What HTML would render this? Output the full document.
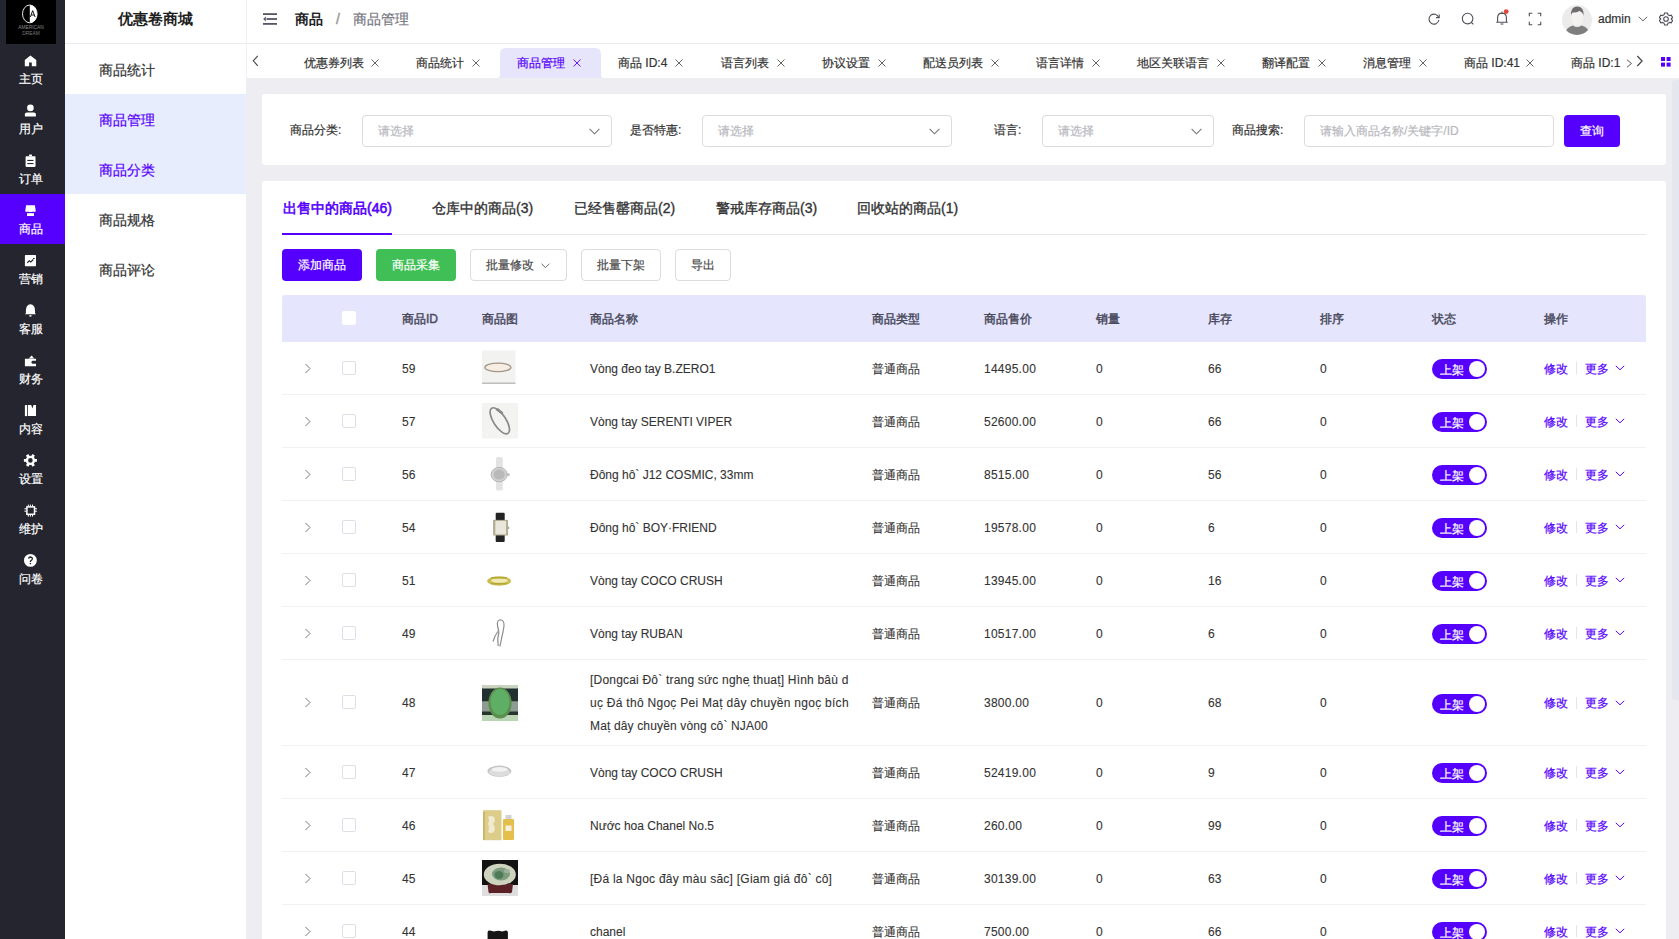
<!DOCTYPE html><html><head><meta charset="utf-8"><style>
*{box-sizing:border-box;margin:0;padding:0}
html,body{width:1679px;height:939px;overflow:hidden;background:#eeeef2;font-family:"Liberation Sans",sans-serif;color:#333;font-size:12px;-webkit-text-stroke-width:0.2px}
.a{position:absolute;white-space:nowrap}
#sb1{position:absolute;left:0;top:0;width:65px;height:939px;background:#25252f}
#logo{position:absolute;left:6px;top:0;width:50px;height:44px;background:#000}
.mi{position:absolute;left:0;width:65px;height:50px;color:#fff}
.mi.on{background:#5500ff}
.mi svg{position:absolute;left:20px;top:6px;width:22px;height:22px}
.mi span{position:absolute;left:0;width:61px;text-align:center;top:27px;font-size:12px;line-height:16px}
#sb2{position:absolute;left:65px;top:0;width:181px;height:939px;background:#fff}
#sb2 .ttl{position:absolute;left:0;top:0;width:181px;height:44px;line-height:38px;text-align:center;font-size:15px;font-weight:bold;color:#1f1f1f;-webkit-text-stroke-width:0;border-bottom:1px solid #e9e9ee}
.si{position:absolute;left:0;width:181px;height:50px;line-height:52px;padding-left:34px;font-size:14px;color:#333}
.si.on{background:#e8edfe;color:#5500ff}
#hdr{position:absolute;left:246px;top:0;width:1433px;height:44px;background:#fff;border-bottom:1px solid #e9e9ee;border-left:1px solid #f0f0f3}
#tabs{position:absolute;left:246px;top:44px;width:1433px;height:34px;background:#fff;border-left:1px solid #f0f0f3}
.tt{position:absolute;top:10px;font-size:12px;line-height:18px;color:#333;white-space:nowrap}
.tx{position:absolute;top:15px;width:8px;height:8px}
.card{position:absolute;background:#fff;border-radius:3px}
.lbl{position:absolute;top:122px;font-size:12px;line-height:16px;color:#333;white-space:nowrap}
.sel{position:absolute;top:115px;height:32px;border:1px solid #dcdcdf;border-radius:4px;background:#fff}
.sel .ph{position:absolute;left:15px;top:7px;font-size:12px;line-height:16px;color:#b8b8be;white-space:nowrap}
.sel svg{position:absolute;right:11px;top:12px;width:11px;height:7px}
.btn{position:absolute;top:249px;height:32px;border-radius:4px;font-size:12px;line-height:32px;text-align:center;white-space:nowrap}
.ptab{position:absolute;top:199px;font-size:14px;line-height:18px;color:#333;white-space:nowrap;-webkit-text-stroke-width:0.35px}
.hd{position:absolute;top:311px;font-size:12px;line-height:16px;color:#4b4b5e;-webkit-text-stroke-width:0.45px;white-space:nowrap}
.sep{position:absolute;left:282px;width:1364px;height:1px;background:#f1f1f1}
.c{position:absolute;font-size:12px;line-height:16px;color:#333;white-space:nowrap;-webkit-text-stroke-width:0.1px}
.cb{position:absolute;left:342px;width:14px;height:14px;border:1px solid #dcdfe6;border-radius:2px;background:#fff}
.arr{position:absolute;left:304px;width:8px;height:11px}
.sw{position:absolute;left:1432px;width:55px;height:20px;border-radius:10px;background:#5500ff}
.sw b{position:absolute;right:2px;top:2px;width:16px;height:16px;border-radius:8px;background:#fff}
.sw i{position:absolute;left:8px;top:2.5px;font-style:normal;color:#fff;font-size:12px;line-height:16px}
.act{position:absolute;font-size:12px;line-height:16px;color:#5500ff;white-space:nowrap}
.vl{position:absolute;left:1576px;width:1px;height:12px;background:#e4e4ea}
.mch{position:absolute;left:1615px;width:10px;height:6px}
.img{position:absolute;left:482px;width:36px;height:36px}
</style></head><body>
<div id="sb1"><div id="logo">
<svg width="50" height="44" viewBox="0 0 50 44" style="position:absolute;left:0;top:0"><ellipse cx="23.8" cy="13.9" rx="7.3" ry="8.9" fill="none" stroke="#fff" stroke-width="0.9"/><path d="M23.8 5 A7.3 8.9 0 0 1 23.8 22.8 Z" fill="#fff"/><path d="M24.3 17 L26.7 10.6 L29.1 17 M25.2 15 H28.2" stroke="#000" stroke-width="0.9" fill="none"/><text x="25" y="28.5" font-size="4.8" fill="#8a8a8a" text-anchor="middle" font-family="Liberation Sans" style="-webkit-text-stroke-width:0">AMERICAN</text><text x="25" y="34.5" font-size="4.8" fill="#7a7a7a" text-anchor="middle" font-family="Liberation Sans" style="-webkit-text-stroke-width:0">DREAM</text></svg>
</div>
<div class="mi" style="top:44px"><svg viewBox="0 0 22 22"><path d="M10.4 5.4 L16.3 9.9 V16.2 H11.8 V12.6 H9.1 V16.2 H4.8 V9.9 Z" fill="#fff"/></svg><span>主页</span></div>
<div class="mi" style="top:94px"><svg viewBox="0 0 22 22"><circle cx="10.4" cy="7.9" r="3.3" fill="#fff"/><path d="M4.9 16.6 V14.3 Q4.9 12.6 6.9 12.6 H13.9 Q15.9 12.6 15.9 14.3 V16.6 Z" fill="#fff"/></svg><span>用户</span></div>
<div class="mi" style="top:144px"><svg viewBox="0 0 22 22"><rect x="5.6" y="6.2" width="9.9" height="10.7" rx="0.8" fill="#fff"/><rect x="9" y="4.6" width="3" height="1.6" fill="#fff"/><rect x="7.3" y="9.9" width="6.2" height="1.1" fill="#25252f"/><rect x="7.3" y="13" width="6.2" height="1.1" fill="#25252f"/></svg><span>订单</span></div>
<div class="mi on" style="top:194px"><svg viewBox="0 0 22 22"><path d="M6.1 5.3 H14.9 L15.8 11.3 Q14.5 12.3 13.2 11.6 Q11.9 12.4 10.5 11.7 Q9.1 12.4 7.8 11.6 Q6.5 12.3 5.2 11.3 Z" fill="#fff"/><path d="M7 12.9 Q8.5 13.5 10.5 13.1 Q12.5 13.5 14 12.9 V16 H7 Z" fill="#fff"/></svg><span>商品</span></div>
<div class="mi" style="top:244px"><svg viewBox="0 0 22 22"><rect x="4.9" y="5.1" width="11.1" height="11.1" rx="0.6" fill="#fff"/><path d="M7.2 12.9 L9.3 10.8 L10.8 12 L13.3 9.5" stroke="#25252f" stroke-width="1.1" fill="none"/><rect x="13" y="8" width="1.6" height="1" fill="#25252f"/></svg><span>营销</span></div>
<div class="mi" style="top:294px"><svg viewBox="0 0 22 22"><path d="M10.4 4.3 Q14.8 5 15 10 V13.2 L16 14.3 H4.9 L5.9 13.2 V10 Q6.1 5 10.4 4.3 Z" fill="#fff"/><path d="M9.1 15.2 H11.8 Q11.6 16.8 10.4 16.8 Q9.2 16.8 9.1 15.2 Z" fill="#fff"/></svg><span>客服</span></div>
<div class="mi" style="top:344px"><svg viewBox="0 0 22 22"><path d="M8.7 8.4 L11.8 5.6 L14 8.4 Z" fill="#fff"/><path d="M4.9 8.8 H16 V10.8 H12.6 Q11.4 11 11.4 12.3 Q11.4 13.7 12.6 13.8 H16 V16.2 H4.9 Z" fill="#fff"/></svg><span>财务</span></div>
<div class="mi" style="top:394px"><svg viewBox="0 0 22 22"><rect x="4.9" y="5.1" width="2.2" height="11" fill="#fff"/><path d="M7.9 5.1 H11.2 L12.4 8.6 L13.5 5.1 H16 V16.1 H7.9 Z" fill="#fff"/></svg><span>内容</span></div>
<div class="mi" style="top:444px"><svg viewBox="0 0 22 22"><g transform="translate(10.4 10.4)" fill="#fff"><circle r="3.5" fill="none" stroke="#fff" stroke-width="2.4"/><rect x="-1.4" y="-6.5" width="2.8" height="2.4" transform="rotate(30)"/><rect x="-1.4" y="-6.5" width="2.8" height="2.4" transform="rotate(90)"/><rect x="-1.4" y="-6.5" width="2.8" height="2.4" transform="rotate(150)"/><rect x="-1.4" y="-6.5" width="2.8" height="2.4" transform="rotate(210)"/><rect x="-1.4" y="-6.5" width="2.8" height="2.4" transform="rotate(270)"/><rect x="-1.4" y="-6.5" width="2.8" height="2.4" transform="rotate(330)"/></g></svg><span>设置</span></div>
<div class="mi" style="top:494px"><svg viewBox="0 0 22 22"><rect x="6.9" y="6.9" width="7.6" height="7.4" fill="none" stroke="#fff" stroke-width="1.5"/><path d="M8.3 4.6 V6.5 M10.4 4.6 V6.5 M12.5 4.6 V6.5 M8.3 14.7 V16.6 M10.4 14.7 V16.6 M12.5 14.7 V16.6 M4.4 8.8 H6.5 M4.4 11.2 H6.5 M14.9 8.8 H17 M14.9 11.2 H17" stroke="#fff" stroke-width="1"/></svg><span>维护</span></div>
<div class="mi" style="top:544px"><svg viewBox="0 0 22 22"><circle cx="10.4" cy="10.4" r="6.4" fill="#fff"/><path d="M8.6 8.6 Q8.8 7 10.5 7 Q12.4 7.1 12.4 8.8 Q12.3 10 11 10.6 Q10.4 11 10.4 12" stroke="#25252f" stroke-width="1.3" fill="none"/><circle cx="10.4" cy="13.6" r="0.8" fill="#25252f"/></svg><span>问卷</span></div>
</div>
<div id="sb2"><div class="ttl">优惠卷商城</div>
<div class="si" style="top:44px">商品统计</div>
<div class="si on" style="top:94px">商品管理</div>
<div class="si on" style="top:144px">商品分类</div>
<div class="si" style="top:194px">商品规格</div>
<div class="si" style="top:244px">商品评论</div>
</div>
<div id="hdr">
<svg class="a" style="left:16px;top:13px" width="14" height="12" viewBox="0 0 14 12"><rect x="0" y="0.2" width="14" height="1.8" fill="#555566"/><rect x="3.5" y="5.1" width="10.5" height="1.8" fill="#555566"/><rect x="0" y="10" width="14" height="1.8" fill="#555566"/><path d="M2.8 3.6 L0.2 6 L2.8 8.4 Z" fill="#555566"/></svg>
<div class="a" style="left:48px;top:10px;font-size:14px;line-height:18px;font-weight:bold;color:#222;-webkit-text-stroke-width:0">商品</div>
<div class="a" style="left:89px;top:10px;font-size:14px;line-height:18px;color:#999;-webkit-text-stroke-width:0.45px">/</div>
<div class="a" style="left:106px;top:10px;font-size:14px;line-height:18px;color:#76767f">商品管理</div>
<svg class="a" style="left:1180px;top:12px" width="14" height="14" viewBox="0 0 14 14"><path d="M11.6 5.2 A5 5 0 1 0 11.9 8" fill="none" stroke="#4f4f5a" stroke-width="1.1"/><path d="M12.2 2.4 V5.6 H9" fill="none" stroke="#4f4f5a" stroke-width="1.1"/></svg>
<svg class="a" style="left:1214px;top:12px" width="14" height="14" viewBox="0 0 14 14"><circle cx="6.6" cy="6.6" r="5.3" fill="none" stroke="#4f4f5a" stroke-width="1.1"/><path d="M10.3 10.3 L12.4 12.4" stroke="#4f4f5a" stroke-width="1.2"/></svg>
<svg class="a" style="left:1247px;top:9px" width="16" height="17" viewBox="0 0 16 17"><path d="M2.2 13.3 H13.8 M3.6 13.3 V8.7 Q3.7 4.2 8 4.1 Q12.3 4.2 12.4 8.7 V13.3 M8 2.6 V4.1" fill="none" stroke="#4f4f5a" stroke-width="1.1"/><path d="M6.6 15 H9.4" stroke="#4f4f5a" stroke-width="1.1"/><circle cx="12.2" cy="2.6" r="2.4" fill="#e0473b"/></svg>
<svg class="a" style="left:1281px;top:12px" width="14" height="14" viewBox="0 0 14 14"><path d="M1.3 4.3 V1.3 H4.3 M9.7 1.3 H12.7 V4.3 M12.7 9.7 V12.7 H9.7 M4.3 12.7 H1.3 V9.7" fill="none" stroke="#4f4f5a" stroke-width="1.1"/></svg>
<svg class="a" style="left:1315px;top:4.5px" width="30" height="30" viewBox="0 0 30 30"><defs><clipPath id="av"><circle cx="15" cy="15" r="15"/></clipPath></defs><g clip-path="url(#av)"><rect width="30" height="30" fill="#ebebeb"/><ellipse cx="15.3" cy="12" rx="6.2" ry="8.6" fill="#f4f1f1"/><path d="M9 10.5 Q8.5 1.6 15.5 1.5 Q22.2 1.8 21.6 11 Q20.8 7 17.5 6 Q14 8 10.5 7.5 Q9.6 8.5 9 10.5 Z" fill="#6d6d6d"/><path d="M3 30 Q3.5 22 11 20.5 Q15 23.5 19.5 20.5 Q27 22 27.5 30 Z" fill="#7e7e7e"/></g></svg>
<div class="a" style="left:1351px;top:11px;font-size:12px;line-height:16px;color:#333">admin</div>
<svg class="a" style="left:1391px;top:16px" width="10" height="6" viewBox="0 0 10 6"><path d="M0.8 0.8 L5 4.8 L9.2 0.8" fill="none" stroke="#666" stroke-width="1"/></svg>
<svg class="a" style="left:1412px;top:12px" width="14" height="14" viewBox="0 0 14 14"><path fill="none" stroke="#4f4f5a" stroke-width="1.1" d="M5.6 1 H8.4 L8.9 2.7 L10.5 3.6 L12.2 3.1 L13.6 5.5 L12.3 6.8 V7.2 L13.6 8.5 L12.2 10.9 L10.5 10.4 L8.9 11.3 L8.4 13 H5.6 L5.1 11.3 L3.5 10.4 L1.8 10.9 L0.4 8.5 L1.7 7.2 V6.8 L0.4 5.5 L1.8 3.1 L3.5 3.6 L5.1 2.7 Z"/><circle cx="7" cy="7" r="2.3" fill="none" stroke="#4f4f5a" stroke-width="1.1"/></svg>
</div>
<div id="tabs">
<svg class="a" style="left:5px;top:11px" width="8" height="12" viewBox="0 0 8 12"><path d="M5.8 0.8 L1.3 5.8 L5.8 10.8" fill="none" stroke="#444" stroke-width="1.1"/></svg>
<svg class="a" style="left:250px;top:4px" width="107" height="30" viewBox="0 0 107 30"><path d="M0 30 Q3 30 3 27 V6 Q3 0 9 0 H98 Q104 0 104 6 V27 Q104 30 107 30 Z" fill="#e7e5fc"/></svg>
<div class="tt" style="left:57px;color:#333">优惠券列表</div>
<svg class="tx" style="left:124px" viewBox="0 0 8 8"><path d="M0.5 0.5 L7.5 7.5 M7.5 0.5 L0.5 7.5" stroke="#555" stroke-width="0.9"/></svg>
<div class="tt" style="left:169px;color:#333">商品统计</div>
<svg class="tx" style="left:225px" viewBox="0 0 8 8"><path d="M0.5 0.5 L7.5 7.5 M7.5 0.5 L0.5 7.5" stroke="#555" stroke-width="0.9"/></svg>
<div class="tt" style="left:270px;color:#5500ff">商品管理</div>
<svg class="tx" style="left:326px" viewBox="0 0 8 8"><path d="M0.5 0.5 L7.5 7.5 M7.5 0.5 L0.5 7.5" stroke="#5500ff" stroke-width="0.9"/></svg>
<div class="tt" style="left:371px;color:#333">商品 ID:4</div>
<svg class="tx" style="left:428px" viewBox="0 0 8 8"><path d="M0.5 0.5 L7.5 7.5 M7.5 0.5 L0.5 7.5" stroke="#555" stroke-width="0.9"/></svg>
<div class="tt" style="left:474px;color:#333">语言列表</div>
<svg class="tx" style="left:530px" viewBox="0 0 8 8"><path d="M0.5 0.5 L7.5 7.5 M7.5 0.5 L0.5 7.5" stroke="#555" stroke-width="0.9"/></svg>
<div class="tt" style="left:575px;color:#333">协议设置</div>
<svg class="tx" style="left:631px" viewBox="0 0 8 8"><path d="M0.5 0.5 L7.5 7.5 M7.5 0.5 L0.5 7.5" stroke="#555" stroke-width="0.9"/></svg>
<div class="tt" style="left:676px;color:#333">配送员列表</div>
<svg class="tx" style="left:744px" viewBox="0 0 8 8"><path d="M0.5 0.5 L7.5 7.5 M7.5 0.5 L0.5 7.5" stroke="#555" stroke-width="0.9"/></svg>
<div class="tt" style="left:789px;color:#333">语言详情</div>
<svg class="tx" style="left:845px" viewBox="0 0 8 8"><path d="M0.5 0.5 L7.5 7.5 M7.5 0.5 L0.5 7.5" stroke="#555" stroke-width="0.9"/></svg>
<div class="tt" style="left:890px;color:#333">地区关联语言</div>
<svg class="tx" style="left:970px" viewBox="0 0 8 8"><path d="M0.5 0.5 L7.5 7.5 M7.5 0.5 L0.5 7.5" stroke="#555" stroke-width="0.9"/></svg>
<div class="tt" style="left:1015px;color:#333">翻译配置</div>
<svg class="tx" style="left:1071px" viewBox="0 0 8 8"><path d="M0.5 0.5 L7.5 7.5 M7.5 0.5 L0.5 7.5" stroke="#555" stroke-width="0.9"/></svg>
<div class="tt" style="left:1116px;color:#333">消息管理</div>
<svg class="tx" style="left:1172px" viewBox="0 0 8 8"><path d="M0.5 0.5 L7.5 7.5 M7.5 0.5 L0.5 7.5" stroke="#555" stroke-width="0.9"/></svg>
<div class="tt" style="left:1217px;color:#333">商品 ID:41</div>
<svg class="tx" style="left:1279px" viewBox="0 0 8 8"><path d="M0.5 0.5 L7.5 7.5 M7.5 0.5 L0.5 7.5" stroke="#555" stroke-width="0.9"/></svg>
<div class="tt" style="left:1324px;color:#333">商品 ID:1</div>
<svg class="a" style="left:1379px;top:15px" width="8" height="9" viewBox="0 0 8 9"><path d="M1 0.8 L5.5 4.5 L1 8.2" fill="none" stroke="#555" stroke-width="1"/></svg>
<div class="a" style="left:1389px;top:0;width:28px;height:34px;background:#fff"></div>
<svg class="a" style="left:1389px;top:11px" width="8" height="12" viewBox="0 0 8 12"><path d="M1.3 1 L6.1 6 L1.3 11" fill="none" stroke="#444" stroke-width="1.2"/></svg>
<svg class="a" style="left:1414px;top:13px" width="10" height="10" viewBox="0 0 10 10"><rect x="0" y="0" width="4" height="4" fill="#5500ff"/><rect x="5.6" y="0" width="4" height="4" fill="#5500ff"/><rect x="0" y="5.6" width="4" height="4" fill="#5500ff"/><rect x="5.6" y="5.6" width="4" height="4" fill="#5500ff"/></svg>
</div>
<div class="card" style="left:262px;top:94px;width:1404px;height:71px"></div>
<div class="lbl" style="left:290px">商品分类:</div>
<div class="sel" style="left:362px;width:250px"><div class="ph">请选择</div><svg viewBox="0 0 11 7"><path d="M0.6 0.8 L5.5 5.8 L10.4 0.8" fill="none" stroke="#777" stroke-width="1.1"/></svg></div>
<div class="lbl" style="left:630px">是否特惠:</div>
<div class="sel" style="left:702px;width:250px"><div class="ph">请选择</div><svg viewBox="0 0 11 7"><path d="M0.6 0.8 L5.5 5.8 L10.4 0.8" fill="none" stroke="#777" stroke-width="1.1"/></svg></div>
<div class="lbl" style="left:994px">语言:</div>
<div class="sel" style="left:1042px;width:172px"><div class="ph">请选择</div><svg viewBox="0 0 11 7"><path d="M0.6 0.8 L5.5 5.8 L10.4 0.8" fill="none" stroke="#777" stroke-width="1.1"/></svg></div>
<div class="lbl" style="left:1232px">商品搜索:</div>
<div class="sel" style="left:1304px;width:250px"><div class="ph">请输入商品名称/关键字/ID</div></div>
<div class="btn" style="left:1564px;top:115px;width:56px;background:#5500ff;color:#fff">查询</div>
<div class="card" style="left:262px;top:181px;width:1404px;height:790px"></div>
<div class="ptab" style="left:283px;color:#5500ff;-webkit-text-stroke-width:0.6px">出售中的商品(46)</div>
<div class="ptab" style="left:432px;">仓库中的商品(3)</div>
<div class="ptab" style="left:574px;">已经售罄商品(2)</div>
<div class="ptab" style="left:716px;">警戒库存商品(3)</div>
<div class="ptab" style="left:857px;">回收站的商品(1)</div>
<div class="a" style="left:282px;top:234px;width:1364px;height:1px;background:#e6e6ea"></div>
<div class="a" style="left:282px;top:233px;width:110px;height:2px;background:#5500ff"></div>
<div class="btn" style="left:282px;width:80px;background:#5500ff;color:#fff">添加商品</div>
<div class="btn" style="left:376px;width:80px;background:#3fbf55;color:#fff">商品采集</div>
<div class="btn" style="left:470px;width:97px;border:1px solid #dcdcdf;color:#4a4a4a;text-align:left;padding-left:15px;line-height:30px">批量修改<svg style="position:absolute;left:70px;top:13px" width="9" height="6" viewBox="0 0 9 6"><path d="M0.6 0.8 L4.5 4.6 L8.4 0.8" fill="none" stroke="#666" stroke-width="1"/></svg></div>
<div class="btn" style="left:581px;width:80px;border:1px solid #dcdcdf;color:#4a4a4a;line-height:30px">批量下架</div>
<div class="btn" style="left:675px;width:56px;border:1px solid #dcdcdf;color:#4a4a4a;line-height:30px">导出</div>
<div class="a" style="left:282px;top:295px;width:1364px;height:47px;background:#e5e5fd;border-radius:3px 3px 0 0"></div>
<div class="cb" style="top:311px;border-color:#fff"></div>
<div class="hd" style="left:402px">商品ID</div>
<div class="hd" style="left:482px">商品图</div>
<div class="hd" style="left:590px">商品名称</div>
<div class="hd" style="left:872px">商品类型</div>
<div class="hd" style="left:984px">商品售价</div>
<div class="hd" style="left:1096px">销量</div>
<div class="hd" style="left:1208px">库存</div>
<div class="hd" style="left:1320px">排序</div>
<div class="hd" style="left:1432px">状态</div>
<div class="hd" style="left:1544px">操作</div>
<div class="sep" style="top:394px"></div>
<svg class="arr" style="top:363px" viewBox="0 0 8 11"><path d="M1.5 1 L6 5.5 L1.5 10" fill="none" stroke="#777" stroke-width="1"/></svg>
<div class="cb" style="top:361px"></div>
<div class="c" style="left:402px;top:361px">59</div>
<svg class="img" style="top:350px" viewBox="0 0 36 36"><rect x="0" y="0.5" width="33.5" height="33" fill="#f2f2f1"/><rect x="0" y="32.6" width="33.5" height="1.2" fill="#b0b0b0"/><ellipse cx="15.9" cy="17.4" rx="13" ry="4.2" fill="#f7ede3" stroke="#a3968a" stroke-width="1.3"/></svg>
<div class="c" style="left:590px;top:361px;letter-spacing:0px">Vòng đeo tay B.ZERO1</div>
<div class="c" style="left:872px;top:361px">普通商品</div>
<div class="c" style="left:984px;top:361px;letter-spacing:0.25px">14495.00</div>
<div class="c" style="left:1096px;top:361px">0</div>
<div class="c" style="left:1208px;top:361px">66</div>
<div class="c" style="left:1320px;top:361px">0</div>
<div class="sw" style="top:359px"><i>上架</i><b></b></div>
<div class="act" style="left:1544px;top:361px">修改</div>
<div class="vl" style="top:362px"></div>
<div class="act" style="left:1585px;top:361px">更多</div>
<svg class="mch" style="top:365px" viewBox="0 0 10 6"><path d="M0.8 0.8 L5 4.8 L9.2 0.8" fill="none" stroke="#5500ff" stroke-width="1"/></svg>
<div class="sep" style="top:447px"></div>
<svg class="arr" style="top:416px" viewBox="0 0 8 11"><path d="M1.5 1 L6 5.5 L1.5 10" fill="none" stroke="#777" stroke-width="1"/></svg>
<div class="cb" style="top:414px"></div>
<div class="c" style="left:402px;top:414px">57</div>
<svg class="img" style="top:403px" viewBox="0 0 36 36"><rect x="0" y="0" width="36" height="35.5" fill="#f3f3f1"/><ellipse cx="17.8" cy="17.8" rx="6.2" ry="15" transform="rotate(-33 17.8 17.8)" fill="none" stroke="#8a8a8a" stroke-width="1.7"/><path d="M14 6.5 L20 11 M15.5 5.5 L21 10" stroke="#888" stroke-width="1.1"/></svg>
<div class="c" style="left:590px;top:414px;letter-spacing:0px">Vòng tay SERENTI VIPER</div>
<div class="c" style="left:872px;top:414px">普通商品</div>
<div class="c" style="left:984px;top:414px;letter-spacing:0.25px">52600.00</div>
<div class="c" style="left:1096px;top:414px">0</div>
<div class="c" style="left:1208px;top:414px">66</div>
<div class="c" style="left:1320px;top:414px">0</div>
<div class="sw" style="top:412px"><i>上架</i><b></b></div>
<div class="act" style="left:1544px;top:414px">修改</div>
<div class="vl" style="top:415px"></div>
<div class="act" style="left:1585px;top:414px">更多</div>
<svg class="mch" style="top:418px" viewBox="0 0 10 6"><path d="M0.8 0.8 L5 4.8 L9.2 0.8" fill="none" stroke="#5500ff" stroke-width="1"/></svg>
<div class="sep" style="top:500px"></div>
<svg class="arr" style="top:469px" viewBox="0 0 8 11"><path d="M1.5 1 L6 5.5 L1.5 10" fill="none" stroke="#777" stroke-width="1"/></svg>
<div class="cb" style="top:467px"></div>
<div class="c" style="left:402px;top:467px">56</div>
<svg class="img" style="top:456px" viewBox="0 0 36 36"><rect x="14" y="1" width="6.8" height="33.5" rx="1.5" fill="#e3e3e3"/><ellipse cx="17.2" cy="18.6" rx="8" ry="7.2" fill="#d2d2d2" stroke="#b4b4b4" stroke-width="1"/><ellipse cx="17.2" cy="18.6" rx="5.6" ry="5" fill="#b9b9b9"/><rect x="25" y="17.3" width="2.6" height="2.6" fill="#bcbcbc"/></svg>
<div class="c" style="left:590px;top:467px;letter-spacing:0px">Đông hô` J12 COSMIC, 33mm</div>
<div class="c" style="left:872px;top:467px">普通商品</div>
<div class="c" style="left:984px;top:467px;letter-spacing:0.25px">8515.00</div>
<div class="c" style="left:1096px;top:467px">0</div>
<div class="c" style="left:1208px;top:467px">56</div>
<div class="c" style="left:1320px;top:467px">0</div>
<div class="sw" style="top:465px"><i>上架</i><b></b></div>
<div class="act" style="left:1544px;top:467px">修改</div>
<div class="vl" style="top:468px"></div>
<div class="act" style="left:1585px;top:467px">更多</div>
<svg class="mch" style="top:471px" viewBox="0 0 10 6"><path d="M0.8 0.8 L5 4.8 L9.2 0.8" fill="none" stroke="#5500ff" stroke-width="1"/></svg>
<div class="sep" style="top:553px"></div>
<svg class="arr" style="top:522px" viewBox="0 0 8 11"><path d="M1.5 1 L6 5.5 L1.5 10" fill="none" stroke="#777" stroke-width="1"/></svg>
<div class="cb" style="top:520px"></div>
<div class="c" style="left:402px;top:520px">54</div>
<svg class="img" style="top:509px" viewBox="0 0 36 36"><rect x="13.7" y="3.7" width="9" height="29.3" rx="1" fill="#232323"/><rect x="11.1" y="10.9" width="14.9" height="15.6" fill="#b3aa92"/><rect x="13.3" y="12" width="10.8" height="13.4" fill="#e9e7dc"/><rect x="26" y="17.5" width="1.2" height="2.5" fill="#aaa"/></svg>
<div class="c" style="left:590px;top:520px;letter-spacing:0px">Đông hô` BOY·FRIEND</div>
<div class="c" style="left:872px;top:520px">普通商品</div>
<div class="c" style="left:984px;top:520px;letter-spacing:0.25px">19578.00</div>
<div class="c" style="left:1096px;top:520px">0</div>
<div class="c" style="left:1208px;top:520px">6</div>
<div class="c" style="left:1320px;top:520px">0</div>
<div class="sw" style="top:518px"><i>上架</i><b></b></div>
<div class="act" style="left:1544px;top:520px">修改</div>
<div class="vl" style="top:521px"></div>
<div class="act" style="left:1585px;top:520px">更多</div>
<svg class="mch" style="top:524px" viewBox="0 0 10 6"><path d="M0.8 0.8 L5 4.8 L9.2 0.8" fill="none" stroke="#5500ff" stroke-width="1"/></svg>
<div class="sep" style="top:606px"></div>
<svg class="arr" style="top:575px" viewBox="0 0 8 11"><path d="M1.5 1 L6 5.5 L1.5 10" fill="none" stroke="#777" stroke-width="1"/></svg>
<div class="cb" style="top:573px"></div>
<div class="c" style="left:402px;top:573px">51</div>
<svg class="img" style="top:562px" viewBox="0 0 36 36"><ellipse cx="17.1" cy="19" rx="12" ry="4.7" fill="#c9bd4e"/><ellipse cx="17.5" cy="18.6" rx="8.5" ry="2.2" fill="#efe9b4"/><rect x="9" y="15" width="16" height="1.4" fill="#b5a83a"/><rect x="9" y="21" width="16" height="1.4" fill="#b5a83a"/></svg>
<div class="c" style="left:590px;top:573px;letter-spacing:0px">Vòng tay COCO CRUSH</div>
<div class="c" style="left:872px;top:573px">普通商品</div>
<div class="c" style="left:984px;top:573px;letter-spacing:0.25px">13945.00</div>
<div class="c" style="left:1096px;top:573px">0</div>
<div class="c" style="left:1208px;top:573px">16</div>
<div class="c" style="left:1320px;top:573px">0</div>
<div class="sw" style="top:571px"><i>上架</i><b></b></div>
<div class="act" style="left:1544px;top:573px">修改</div>
<div class="vl" style="top:574px"></div>
<div class="act" style="left:1585px;top:573px">更多</div>
<svg class="mch" style="top:577px" viewBox="0 0 10 6"><path d="M0.8 0.8 L5 4.8 L9.2 0.8" fill="none" stroke="#5500ff" stroke-width="1"/></svg>
<div class="sep" style="top:659px"></div>
<svg class="arr" style="top:628px" viewBox="0 0 8 11"><path d="M1.5 1 L6 5.5 L1.5 10" fill="none" stroke="#777" stroke-width="1"/></svg>
<div class="cb" style="top:626px"></div>
<div class="c" style="left:402px;top:626px">49</div>
<svg class="img" style="top:615px" viewBox="0 0 36 36"><path d="M16.8 16 Q13.5 6 17.5 5 Q22.5 4.5 22 11 Q21.2 17 19.6 23 Q18.8 28 17.8 31.5 M16.5 15.5 Q12.5 21 11 26.5 M17 16.5 Q15 24 16.2 31" fill="none" stroke="#8d8d8d" stroke-width="1.2"/></svg>
<div class="c" style="left:590px;top:626px;letter-spacing:0px">Vòng tay RUBAN</div>
<div class="c" style="left:872px;top:626px">普通商品</div>
<div class="c" style="left:984px;top:626px;letter-spacing:0.25px">10517.00</div>
<div class="c" style="left:1096px;top:626px">0</div>
<div class="c" style="left:1208px;top:626px">6</div>
<div class="c" style="left:1320px;top:626px">0</div>
<div class="sw" style="top:624px"><i>上架</i><b></b></div>
<div class="act" style="left:1544px;top:626px">修改</div>
<div class="vl" style="top:627px"></div>
<div class="act" style="left:1585px;top:626px">更多</div>
<svg class="mch" style="top:630px" viewBox="0 0 10 6"><path d="M0.8 0.8 L5 4.8 L9.2 0.8" fill="none" stroke="#5500ff" stroke-width="1"/></svg>
<div class="sep" style="top:745px"></div>
<svg class="arr" style="top:697px" viewBox="0 0 8 11"><path d="M1.5 1 L6 5.5 L1.5 10" fill="none" stroke="#777" stroke-width="1"/></svg>
<div class="cb" style="top:695px"></div>
<div class="c" style="left:402px;top:695px">48</div>
<svg class="img" style="top:685px" viewBox="0 0 36 36"><rect x="0" y="0" width="36" height="36" fill="#b9d5b4"/><rect x="0" y="0" width="36" height="3.5" fill="#c9d3bf"/><rect x="0" y="3.5" width="36" height="13" fill="#22302f"/><rect x="0" y="17" width="36" height="10" fill="#8c9c92"/><rect x="0" y="26.5" width="36" height="3.5" fill="#26352c"/><ellipse cx="18" cy="18" rx="11.6" ry="15.5" fill="#5c8f4e"/><ellipse cx="18" cy="17" rx="9.5" ry="13" fill="#5fae66"/></svg>
<div class="c" style="left:590px;top:672px;letter-spacing:0.2px">[Dongcai Đô` trang sức nghe ̣thuaṭ] Hình bâù d</div>
<div class="c" style="left:590px;top:695px;letter-spacing:0.28px">uc̣ Đá thô Ngoc̣ Pei Maṭ dây chuyền ngoc̣ bích</div>
<div class="c" style="left:590px;top:718px;letter-spacing:0.15px">Maṭ dây chuyền vòng cô` NJA00</div>
<div class="c" style="left:872px;top:695px">普通商品</div>
<div class="c" style="left:984px;top:695px;letter-spacing:0.25px">3800.00</div>
<div class="c" style="left:1096px;top:695px">0</div>
<div class="c" style="left:1208px;top:695px">68</div>
<div class="c" style="left:1320px;top:695px">0</div>
<div class="sw" style="top:694px"><i>上架</i><b></b></div>
<div class="act" style="left:1544px;top:695px">修改</div>
<div class="vl" style="top:697px"></div>
<div class="act" style="left:1585px;top:695px">更多</div>
<svg class="mch" style="top:700px" viewBox="0 0 10 6"><path d="M0.8 0.8 L5 4.8 L9.2 0.8" fill="none" stroke="#5500ff" stroke-width="1"/></svg>
<div class="sep" style="top:798px"></div>
<svg class="arr" style="top:767px" viewBox="0 0 8 11"><path d="M1.5 1 L6 5.5 L1.5 10" fill="none" stroke="#777" stroke-width="1"/></svg>
<div class="cb" style="top:765px"></div>
<div class="c" style="left:402px;top:765px">47</div>
<svg class="img" style="top:754px" viewBox="0 0 36 36"><ellipse cx="17.4" cy="17.2" rx="11.9" ry="5.6" fill="#c4c4c4"/><ellipse cx="17.4" cy="18.2" rx="10.5" ry="4" fill="#dcdcdc"/><ellipse cx="17.6" cy="15.4" rx="8" ry="2.4" fill="#f2f2f2"/></svg>
<div class="c" style="left:590px;top:765px;letter-spacing:0px">Vòng tay COCO CRUSH</div>
<div class="c" style="left:872px;top:765px">普通商品</div>
<div class="c" style="left:984px;top:765px;letter-spacing:0.25px">52419.00</div>
<div class="c" style="left:1096px;top:765px">0</div>
<div class="c" style="left:1208px;top:765px">9</div>
<div class="c" style="left:1320px;top:765px">0</div>
<div class="sw" style="top:763px"><i>上架</i><b></b></div>
<div class="act" style="left:1544px;top:765px">修改</div>
<div class="vl" style="top:766px"></div>
<div class="act" style="left:1585px;top:765px">更多</div>
<svg class="mch" style="top:769px" viewBox="0 0 10 6"><path d="M0.8 0.8 L5 4.8 L9.2 0.8" fill="none" stroke="#5500ff" stroke-width="1"/></svg>
<div class="sep" style="top:851px"></div>
<svg class="arr" style="top:820px" viewBox="0 0 8 11"><path d="M1.5 1 L6 5.5 L1.5 10" fill="none" stroke="#777" stroke-width="1"/></svg>
<div class="cb" style="top:818px"></div>
<div class="c" style="left:402px;top:818px">46</div>
<svg class="img" style="top:807px" viewBox="0 0 36 36"><rect x="1" y="3.2" width="18.5" height="30" fill="#dccd8a"/><rect x="1" y="5" width="2" height="28" fill="#c9b56e"/><path d="M6 10 Q9 8 12 10 Q14 14 11 17 Q14 20 12 25 Q9 27 6 25 Q8 20 6 17 Q8 13 6 10 Z" fill="#f2ead0"/><rect x="21" y="12" width="11" height="21" rx="1" fill="#e4bf4c"/><rect x="23.5" y="8" width="6" height="4" fill="#d2d2d2"/><rect x="23.5" y="18.5" width="6" height="5.5" fill="#f6efde"/></svg>
<div class="c" style="left:590px;top:818px;letter-spacing:0px">Nước hoa Chanel No.5</div>
<div class="c" style="left:872px;top:818px">普通商品</div>
<div class="c" style="left:984px;top:818px;letter-spacing:0.25px">260.00</div>
<div class="c" style="left:1096px;top:818px">0</div>
<div class="c" style="left:1208px;top:818px">99</div>
<div class="c" style="left:1320px;top:818px">0</div>
<div class="sw" style="top:816px"><i>上架</i><b></b></div>
<div class="act" style="left:1544px;top:818px">修改</div>
<div class="vl" style="top:819px"></div>
<div class="act" style="left:1585px;top:818px">更多</div>
<svg class="mch" style="top:822px" viewBox="0 0 10 6"><path d="M0.8 0.8 L5 4.8 L9.2 0.8" fill="none" stroke="#5500ff" stroke-width="1"/></svg>
<div class="sep" style="top:904px"></div>
<svg class="arr" style="top:873px" viewBox="0 0 8 11"><path d="M1.5 1 L6 5.5 L1.5 10" fill="none" stroke="#777" stroke-width="1"/></svg>
<div class="cb" style="top:871px"></div>
<div class="c" style="left:402px;top:871px">45</div>
<svg class="img" style="top:860px" viewBox="0 0 36 36"><rect x="0" y="0" width="36" height="25" fill="#121212"/><rect x="0" y="25" width="36" height="11" fill="#dedede"/><path d="M5.5 24 H31 L30 32 Q29 34 27 33 H9 Q7 34 6.5 32 Z" fill="#5c2027"/><ellipse cx="17.8" cy="14.5" rx="16" ry="10.8" fill="#cdd3bf"/><ellipse cx="19" cy="14" rx="9" ry="6.5" fill="#7d9c7e"/><ellipse cx="17" cy="15" rx="4.5" ry="4" fill="#4f7a58"/><ellipse cx="25" cy="11" rx="3" ry="2" fill="#9db39e"/></svg>
<div class="c" style="left:590px;top:871px;letter-spacing:0.24px">[Đá la Ngoc đây màu săc] [Giam giá đô` cô]</div>
<div class="c" style="left:872px;top:871px">普通商品</div>
<div class="c" style="left:984px;top:871px;letter-spacing:0.25px">30139.00</div>
<div class="c" style="left:1096px;top:871px">0</div>
<div class="c" style="left:1208px;top:871px">63</div>
<div class="c" style="left:1320px;top:871px">0</div>
<div class="sw" style="top:869px"><i>上架</i><b></b></div>
<div class="act" style="left:1544px;top:871px">修改</div>
<div class="vl" style="top:872px"></div>
<div class="act" style="left:1585px;top:871px">更多</div>
<svg class="mch" style="top:875px" viewBox="0 0 10 6"><path d="M0.8 0.8 L5 4.8 L9.2 0.8" fill="none" stroke="#5500ff" stroke-width="1"/></svg>
<svg class="arr" style="top:926px" viewBox="0 0 8 11"><path d="M1.5 1 L6 5.5 L1.5 10" fill="none" stroke="#777" stroke-width="1"/></svg>
<div class="cb" style="top:924px"></div>
<div class="c" style="left:402px;top:924px">44</div>
<svg class="img" style="top:913px" viewBox="0 0 36 36"><path d="M5.6 36 V19 Q6 17.4 8 17.6 L12 18.6 Q16 17 20 18.4 L24 17.6 Q25.9 17.6 25.9 19.5 V36 Z" fill="#161616"/></svg>
<div class="c" style="left:590px;top:924px;letter-spacing:0px">chanel</div>
<div class="c" style="left:872px;top:924px">普通商品</div>
<div class="c" style="left:984px;top:924px;letter-spacing:0.25px">7500.00</div>
<div class="c" style="left:1096px;top:924px">0</div>
<div class="c" style="left:1208px;top:924px">66</div>
<div class="c" style="left:1320px;top:924px">0</div>
<div class="sw" style="top:922px"><i>上架</i><b></b></div>
<div class="act" style="left:1544px;top:924px">修改</div>
<div class="vl" style="top:925px"></div>
<div class="act" style="left:1585px;top:924px">更多</div>
<svg class="mch" style="top:928px" viewBox="0 0 10 6"><path d="M0.8 0.8 L5 4.8 L9.2 0.8" fill="none" stroke="#5500ff" stroke-width="1"/></svg>
<div class="a" style="left:1672px;top:80px;width:7px;height:620px;background:#e6e6ee;border-radius:3px 0 0 3px"></div>
</body></html>
